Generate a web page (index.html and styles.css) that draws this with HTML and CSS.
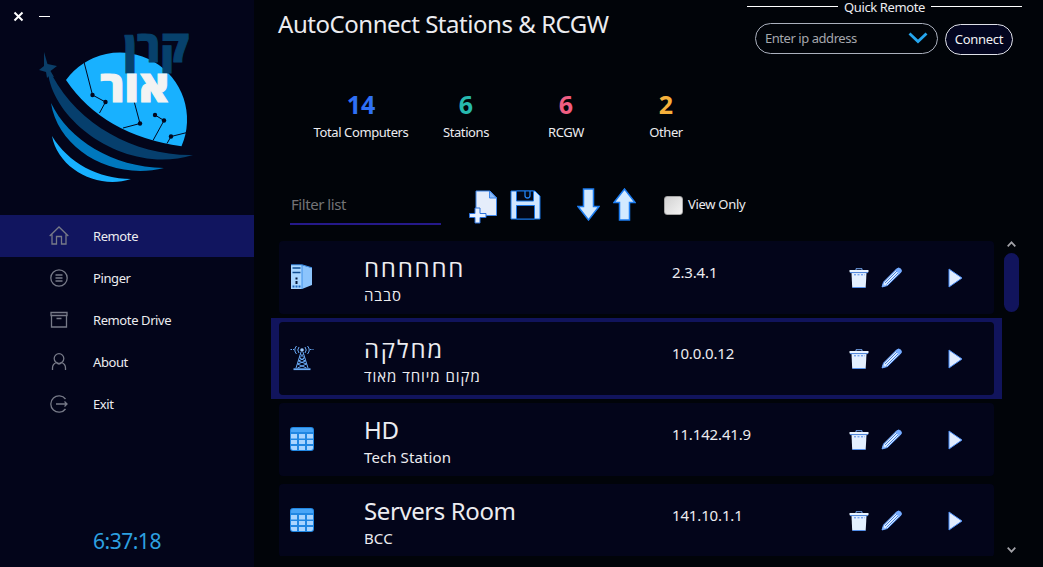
FILE: index.html
```html
<!DOCTYPE html>
<html lang="en">
<head>
<meta charset="utf-8">
<title>AutoConnect</title>
<link rel="stylesheet" href="styles.css">
</head>
<body>
<svg class="defs" width="0" height="0">
  <symbol id="trash" viewBox="0 0 20 20"><path d="M2.500 5h15l-.8 14.500H3.200z" fill="#e4f0ff"/><path d="M7 2V.7h6V2" fill="none" stroke="#78a9ef"/><path d="M.5 2h19v2.200H.5z" fill="#e8f3ff"/><path d="M1 4.600h18M3.500 19.500h13" stroke="#5590eb"/><path d="M5 6.800h11" stroke="#4a86e8" stroke-dasharray="2 1.500"/></symbol>
  <symbol id="pencil" viewBox="0 0 21 21"><path d="M1 20l1.500-5L15.500 2q2-2 4-.2t0 4L6.500 18.500z" fill="#dcecff" stroke="#4f8df0"/><path d="M4 16L16 4M5.500 17.500L17.500 5.500" stroke="#4682df" fill="none"/><path d="M14.500 3l1.500-1.500q2-1 3.500.5t.5 3.500L18 7z" fill="#78adff"/><path d="M1 20l1-3.500 2.500 2.500z" fill="#8dbcff"/></symbol>
  <symbol id="play" viewBox="0 0 15 20"><path d="M1 1l13 9-13 9z" fill="#e2edff" stroke="#4b8df5"/></symbol>
  <symbol id="table" viewBox="0 0 24 24"><rect width="24" height="24" rx="3" fill="#2187e2"/><path d="M1 3q0-2 2-2h18q2 0 2 2v2H1z" fill="#48a5f7"/><path d="M1 7h6v4.500H1zM9 7h6v4.500H9zM17 7h6v4.500h-6zM1 13h6v4H1zM9 13h6v4H9zM17 13h6v4h-6zM1 19h6v4H3q-2 0-2-2zM9 19h6v4H9zM17 19h6v2q0 2-2 2h-4z" fill="#a9d5ff"/></symbol>
</svg>
<div class="app">
  <aside class="sidebar">
    <div class="brand">
      <svg width="254" height="215" viewBox="0 0 254 215">
        <path d="M14.500 12.500l8 8M22.500 12.500l-8 8" stroke="#fff" stroke-width="2"/><path d="M39 16.500h11" stroke="#fff"/>
        <path d="M66 80A67 67 0 0 1 181.500 146.300Q103 135 66 80z" fill="#18b1ff"/>
        <g fill="none" stroke="#03071d"><path d="M84 62l8.500 33 13 7-6 11M134 101l6 22.500-17 4.500M155 115l9 5.500-11 20M187 132.500l-16 4-4 7"/></g>
        <g fill="#03071d"><circle cx="92.500" cy="95" r="2.200"/><circle cx="105.500" cy="102" r="2.200"/><circle cx="140" cy="123.500" r="2.200"/><circle cx="155" cy="115" r="2.200"/><circle cx="164" cy="120.500" r="2.200"/><circle cx="171" cy="136.500" r="2.200"/></g>
        <path d="M48.500 76C57 125 128 175 193 155C135 156 79 125 52.500 76z" fill="#063f6d"/>
        <path d="M44 52l3.500 12 9.500 2-6.500 5 3.500 6-5-1-2 2-1-6-7-2 5-4z" fill="#0a3e68"/>
        <path d="M51 103C58 149 112 181 164 168C112 167 69 140 51 103z" fill="#0078bd"/>
        <path d="M52 136C58 169 98 190 131 179C99 179 68 163 52 136z" fill="#17b1ff"/>
        <text class="logo-text" x="124" y="62" textLength="65" lengthAdjust="spacingAndGlyphs" font-size="44" fill="#07416c" stroke="#07416c">קרן</text>
        <text class="logo-text" x="100" y="101.500" textLength="69" lengthAdjust="spacingAndGlyphs" font-size="43" fill="#f3f3f3" stroke="#f3f3f3">אור</text>
      </svg>
    </div>
    <nav class="nav">
      <a class="nav-item active"><svg width="20" height="20" viewBox="0 0 20 20"><path d="M.7 10L10 1l9.300 9M3 8.500V18h4.500v-7.500h5V18H17V8.500"/></svg><span>Remote</span></a>
      <a class="nav-item"><svg width="20" height="20" viewBox="0 0 20 20"><circle cx="10" cy="10" r="8.200"/><path d="M6.500 7h7M6.500 10h7M6.500 13h7"/></svg><span>Pinger</span></a>
      <a class="nav-item"><svg width="20" height="20" viewBox="0 0 20 20"><path d="M2 2.500h16v3H2zM2.500 5.500V17h15V5.500M7.500 8.500h5"/></svg><span>Remote Drive</span></a>
      <a class="nav-item"><svg width="20" height="20" viewBox="0 0 20 20"><circle cx="10" cy="6.500" r="4.800"/><path d="M3.500 18v-2q0-4 4-5.500 2.500 3 5 0 4 1.500 4 5.500v2"/></svg><span>About</span></a>
      <a class="nav-item"><svg width="20" height="20" viewBox="0 0 20 20"><path d="M16.500 5A8.200 8.200 0 1 0 16.500 15M7 10h11M15.500 7.500L18 10l-2.500 2.500"/></svg><span>Exit</span></a>
    </nav>
    <div class="clock">6:37:18</div>
  </aside>
  <main class="main">
    <header class="header">
      <h1 class="title">AutoConnect Stations &amp; RCGW</h1>
      <section class="quick">
        <div class="legend"><span>Quick Remote</span></div>
        <div class="quick-row">
          <div class="combo"><span>Enter ip address</span><svg width="20" height="12" viewBox="0 0 20 12"><path d="M1.500 1.500L10 9.500l8.500-8" fill="none" stroke="#25a6ee" stroke-width="2.800"/></svg></div>
          <button class="connect">Connect</button>
        </div>
      </section>
    </header>
    <section class="stats">
      <div class="stat"><b class="blue">14</b><span>Total Computers</span></div>
      <div class="stat"><b class="teal">6</b><span>Stations</span></div>
      <div class="stat"><b class="pink">6</b><span>RCGW</span></div>
      <div class="stat"><b class="gold">2</b><span>Other</span></div>
    </section>
    <section class="toolbar">
      <div class="filter">Filter list</div>
      <svg class="ic-add" width="29" height="34" viewBox="0 0 29 34"><path d="M7 1h14l6.500 7v17.500H7z" fill="#e5edfb" stroke="#3e86e9"/><path d="M20.500 1v7h7z" fill="#8cbcfa" stroke="#3e86e9"/><path d="M6 18h5v5.500h6v4h-6V33H6v-5.500H.500v-4H6z" fill="#e8f2ff" stroke="#2d73dc"/></svg>
      <svg class="ic-save" width="31" height="30" viewBox="0 0 31 30"><path d="M1 1h24l5 5v23H1z" fill="#cfe5ff" stroke="#1976e8"/><path d="M6.500 1h17v10h-17zM6.500 15.500h18V29h-18z" fill="#020615" stroke="#1976e8"/><path d="M15 1v4.500q0 2.500 2.500 2.500T20 5.500V1" fill="none" stroke="#2380ef" stroke-width="1.300"/></svg>
      <svg class="ic-down" width="23" height="33" viewBox="0 0 23 33"><path d="M6.500 1h10v17.500H22L11.500 32 1 18.500h5.500z" fill="#d3eaff" stroke="#1c7cf0" stroke-width="1.500"/></svg>
      <svg class="ic-up" width="23" height="33" viewBox="0 0 23 33"><path d="M6.500 32h10V14.500H22L11.500 1 1 14.500h5.500z" fill="#d3eaff" stroke="#1c7cf0" stroke-width="1.500"/></svg>
      <i class="check"></i><span class="check-label">View Only</span>
    </section>
    <section class="list-area">
      <div class="list">
        <div class="item"><article class="card">
          <svg class="kind" width="24" height="26" viewBox="0 0 24 26"><path d="M1 1h11v24H1z" fill="#a9d6ff"/><path d="M12 1l10 3v17l-10 4z" fill="#8cc4fc"/><path d="M2.500 4h8M2.500 8.500h8" stroke="#104d91" stroke-width="1.500"/><path d="M6.500 13.500v2M6.500 17v3" stroke="#04183c" stroke-width="2"/><path d="M2.500 22.500h8" stroke="#1e68c0" stroke-width="2" stroke-dasharray="2 1"/><path d="M1 .8h11l10 3M12 1v24" fill="none" stroke="#3f90e8"/></svg>
          <div class="names he" lang="he"><div class="name">חחחחחח</div><div class="place">סבבה</div></div><span class="ip">2.3.4.1</span>
          <div class="actions"><svg class="a1"><use href="#trash"/></svg><svg class="a2"><use href="#pencil"/></svg><svg class="a3"><use href="#play"/></svg></div></article></div>
        <div class="item selected"><article class="card">
          <svg class="kind" width="24" height="26" viewBox="0 0 24 26"><g fill="none" stroke="#68aaf6"><path d="M3.500 24.200h17" stroke-width="1.800"/><path d="M11 7L6 23M13 7l5 16M10.500 9l4 4-6 3 8 3-9 4M13.500 9l-4 4 6 3-8 3 9 4"/><path d="M9 2Q6.500 5 9 8M15 2q2.500 3 0 6M6.500 1q-3.500 4 0 8M17.500 1q3.500 4 0 8"/><path d="M.5 4.500H4M20 4.500h3.500" stroke-dasharray="1.500 1"/></g><circle cx="12" cy="5" r="1.800" fill="#9ccbff"/></svg>
          <div class="names he" lang="he"><div class="name">מחלקה</div><div class="place">מקום מיוחד מאוד</div></div><span class="ip">10.0.0.12</span>
          <div class="actions"><svg class="a1"><use href="#trash"/></svg><svg class="a2"><use href="#pencil"/></svg><svg class="a3"><use href="#play"/></svg></div></article></div>
        <div class="item"><article class="card">
          <svg class="kind" width="24" height="24"><use href="#table"/></svg>
          <div class="names"><div class="name">HD</div><div class="place">Tech Station</div></div><span class="ip">11.142.41.9</span>
          <div class="actions"><svg class="a1"><use href="#trash"/></svg><svg class="a2"><use href="#pencil"/></svg><svg class="a3"><use href="#play"/></svg></div></article></div>
        <div class="item"><article class="card">
          <svg class="kind" width="24" height="24"><use href="#table"/></svg>
          <div class="names"><div class="name">Servers Room</div><div class="place">BCC</div></div><span class="ip">141.10.1.1</span>
          <div class="actions"><svg class="a1"><use href="#trash"/></svg><svg class="a2"><use href="#pencil"/></svg><svg class="a3"><use href="#play"/></svg></div></article></div>
      </div>
      <div class="scroll">
        <svg width="9" height="6" viewBox="0 0 9 6"><path d="M.7 5.300l3.800-4 3.800 4"/></svg>
        <i class="thumb"></i>
        <svg width="9" height="6" viewBox="0 0 9 6"><path d="M.7.700l3.800 4 3.800-4"/></svg>
      </div>
    </section>
  </main>
</div>
</body>
</html>
```
FILE: styles.css
```css
* { box-sizing: border-box; }
body { margin: 0; background: #010409; color: #ececf0; font-family: "Noto Sans", "Open Sans", sans-serif; font-size: 13px; overflow: hidden; }
.defs { display: block; position: absolute; }
.app { display: flex; width: 1043px; height: 567px; }
.sidebar { width: 254px; background: #03051a; display: flex; flex-direction: column; flex: none; }
.brand { height: 215px; }
.brand svg { display: block; }
.logo-text { font-family: "Open Sans", "Noto Sans", "DejaVu Sans", sans-serif; font-weight: 800; }
.nav-item { display: flex; align-items: center; height: 42px; padding-left: 49px; gap: 24px; letter-spacing: -0.4px; }
.nav-item span { margin-bottom: 1px; }
.nav-item svg { fill: none; stroke: #777a88; stroke-width: 1.3; }
.nav-item.active { background: #11155f; }
.clock { margin-top: auto; height: 52px; line-height: 52px; text-align: center; color: #2da0e0; font-size: 21px; letter-spacing: -0.5px; }
.main { flex: 1; min-width: 0; display: flex; flex-direction: column; }
.header { height: 84px; display: flex; justify-content: space-between; padding: 0 21px 0 24px; }
.title { margin: 6px 0 0; font-size: 24px; line-height: 35px; font-weight: 400; letter-spacing: -0.46px; white-space: nowrap; }
.quick { width: 275px; }
.legend { display: flex; align-items: center; gap: 6px; height: 14px; letter-spacing: -0.4px; white-space: nowrap; }
.legend::before, .legend::after { content: ""; flex: 1; height: 1px; background: #fff; margin-bottom: 1px; }
.quick-row { display: flex; gap: 7px; padding: 9px 0 0 8px; }
.combo { width: 183px; height: 31px; border: 1px solid #aab0bd; border-radius: 16px; display: flex; align-items: center; justify-content: space-between; padding: 0 9px; color: #a5a7ad; letter-spacing: -0.45px; }
.combo span { margin-bottom: 2px; }
.combo svg { margin-bottom: 1px; }
.connect { margin-top: 1px; width: 68px; height: 31px; border: 1.5px solid #dfe1e8; border-radius: 16px; background: #03051f; color: #f2f2f4; font: inherit; padding: 0 0 2px; letter-spacing: -0.3px; }
.stats { display: grid; grid-template-columns: 110px 100px 100px 100px; padding-left: 52px; height: 96px; }
.stat { text-align: center; letter-spacing: -0.4px; white-space: nowrap; }
.stat b { display: block; font-size: 25px; line-height: 40px; letter-spacing: 0; }
.stat span { display: block; line-height: 17px; }
.blue { color: #2f70f5; }
.teal { color: #27b9ae; }
.pink { color: #f05e82; }
.gold { color: #f6b13c; }
.toolbar { height: 57px; display: flex; align-items: flex-start; padding: 8px 0 0 36px; }
.filter { width: 151px; height: 37px; padding: 4px 1px; border-bottom: 2px solid #25198a; color: #737376; font-size: 15px; line-height: 24px; letter-spacing: -0.45px; }
.ic-add { margin: 2px 0 0 28px; }
.ic-save { margin: 2px 0 0 12px; }
.ic-down { margin-left: 36px; }
.ic-up { margin-left: 13px; }
.check { width: 19px; height: 19px; margin: 8px 5px 0 28px; border: 1px solid #a5a5a5; border-radius: 3px; background: linear-gradient(135deg, #d2d2d2, #f3f3f3); }
.check-label { line-height: 18px; margin-top: 7px; letter-spacing: -0.3px; }
.list-area { display: flex; height: 319px; padding-left: 17px; }
.list { width: 731px; height: 319px; overflow: hidden; }
.item { height: 81px; padding: 4px 8px; }
.selected { background: #11145c; }
.card { display: flex; height: 73px; background: #03051a; border-radius: 4px; padding-left: 11px; }
.kind { align-self: center; flex: none; margin-bottom: 1px; }
.names { width: 308px; margin-left: 50px; padding-top: 10px; }
.name { font-size: 24px; line-height: 33px; letter-spacing: -0.4px; }
.place { font-size: 15px; line-height: 22px; letter-spacing: 0.1px; }
.he { font-family: "Open Sans", "Noto Sans", sans-serif; }
.he .name { letter-spacing: 1.8px; }
.he .place { letter-spacing: 0.95px; }
.ip { width: 177px; padding-top: 20px; font-size: 15px; line-height: 22px; letter-spacing: -0.15px; }
.actions { display: flex; align-items: center; }
.a1 { width: 20px; height: 20px; }
.a2 { width: 21px; height: 21px; margin-left: 12px; }
.a3 { width: 15px; height: 20px; margin-left: 46px; }
.scroll { width: 19px; height: 316px; display: flex; flex-direction: column; align-items: center; padding-top: 4px; }
.scroll svg { fill: none; stroke: #a2a2a8; stroke-width: 1.7; flex: none; }
.scroll svg:last-child { margin-top: auto; }
.thumb { width: 15px; height: 59px; margin-top: 6px; border-radius: 8px; background: #11145c; }
```
